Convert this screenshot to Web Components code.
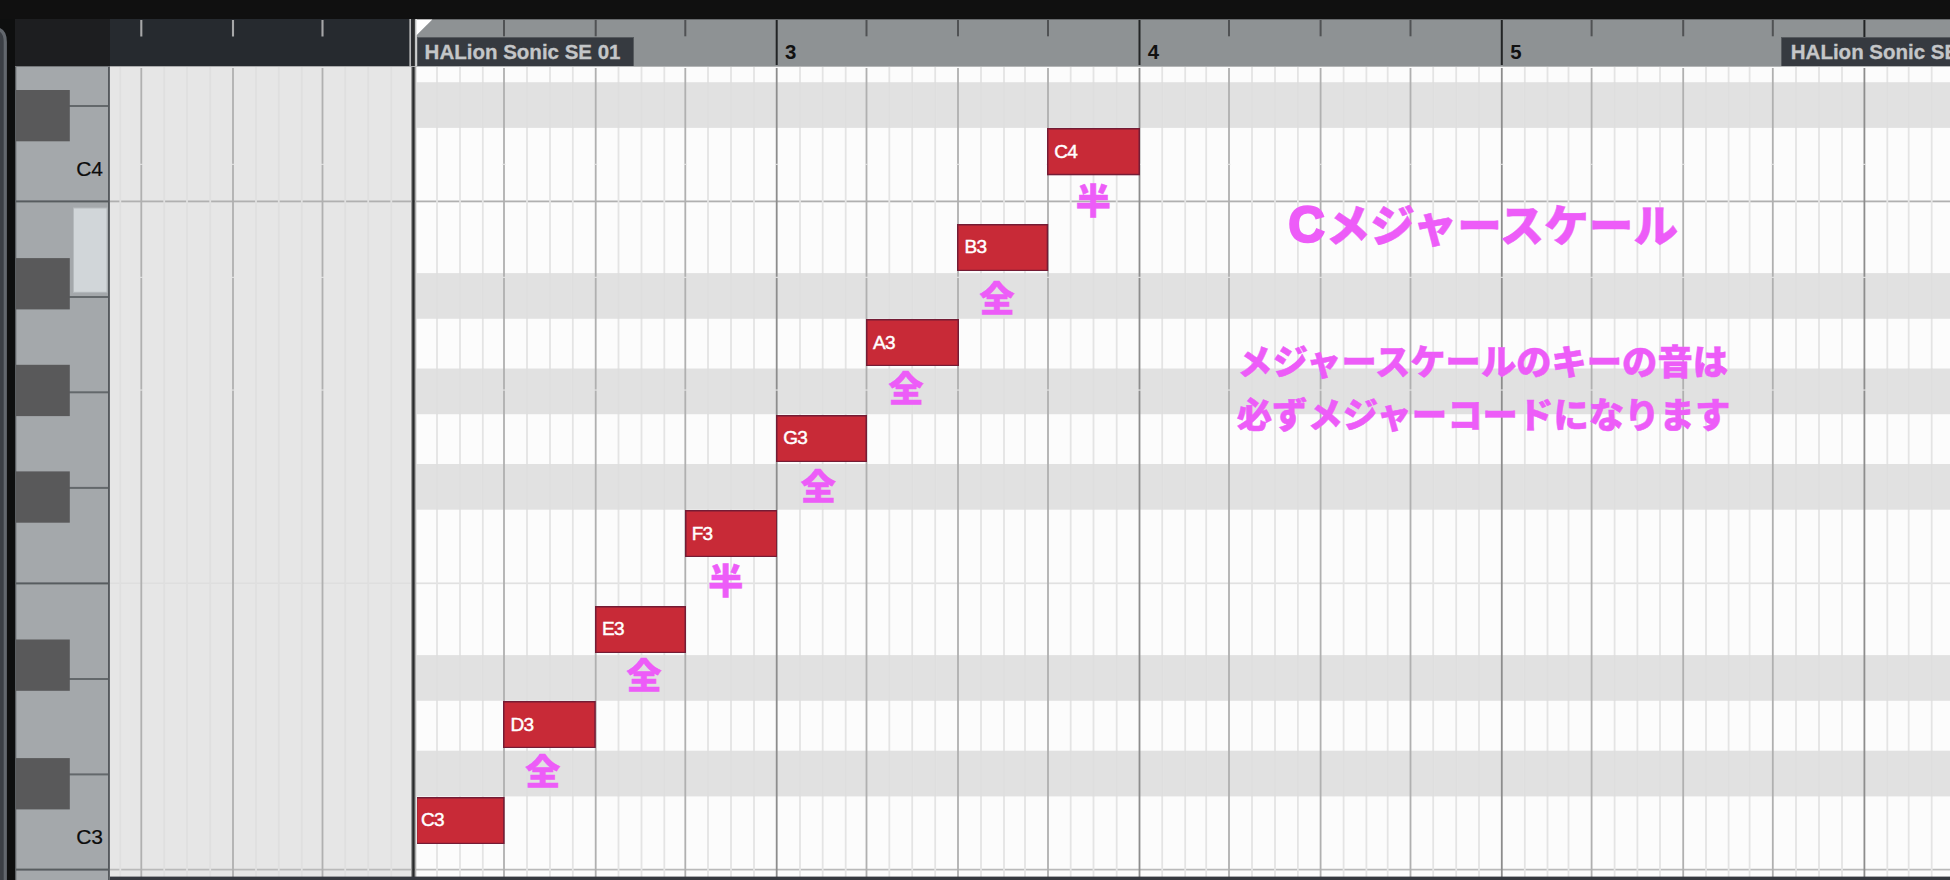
<!DOCTYPE html>
<html lang="ja">
<head>
<meta charset="utf-8">
<title>Key Editor</title>
<style>
html,body{margin:0;height:100%;background:#101010;overflow:hidden}
body{font-family:"Liberation Sans",Arial,sans-serif}
.latin{font:bold 50px/0 "Liberation Sans",Arial,sans-serif;-webkit-text-stroke:2.6px #ed5cf8;margin:0 1.2px 0 -1.2px}
</style>
</head>
<body>
<key-editor>
  <side-rail slot="rail"></side-rail>
  <ruler-corner slot="corner"></ruler-corner>
  <time-ruler slot="ruler">
    <part-label x="417.3" w="216.4" pad="7.3">HALion Sonic SE 01</part-label>
    <part-label x="1780.5" w="218" pad="10.3">HALion Sonic SE 01</part-label>
    <bar-number x="785">3</bar-number>
    <bar-number x="1147.8">4</bar-number>
    <bar-number x="1510.2">5</bar-number>
  </time-ruler>
  <piano-keys slot="keys">
    <key-name y="169">C4</key-name>
    <key-name y="837.3">C3</key-name>
  </piano-keys>
  <note-grid slot="grid">
    <midi-note x="417" y="796.5" w="87.6" first>C3</midi-note>
    <midi-note x="503.4" y="701" w="92.8">D3</midi-note>
    <midi-note x="595" y="605.5" w="91">E3</midi-note>
    <midi-note x="684.6" y="510.2" w="92.6">F3</midi-note>
    <midi-note x="776.2" y="414.6" w="91">G3</midi-note>
    <midi-note x="865.9" y="319" w="93">A3</midi-note>
    <midi-note x="957.4" y="223.7" w="91.2">B3</midi-note>
    <midi-note x="1047.2" y="128.3" w="93">C4</midi-note>
    <text-mark x="542.7" y="770.4">全</text-mark>
    <text-mark x="644" y="674.1">全</text-mark>
    <text-mark x="725.7" y="579">半</text-mark>
    <text-mark x="818.3" y="485.1">全</text-mark>
    <text-mark x="906" y="386.9">全</text-mark>
    <text-mark x="997" y="296.9">全</text-mark>
    <text-mark x="1093.3" y="198.7">半</text-mark>
    <text-mark x="1483.8" y="222.6" size="44.6"><span class="latin">C</span>メジャースケール</text-mark>
    <text-mark x="1482.7" y="359.6" size="35.3">メジャースケールのキーの音は</text-mark>
    <text-mark x="1483.5" y="413" size="35.4">必ずメジャーコードになります</text-mark>
  </note-grid>
</key-editor>
<script>
const BEATS=[141.3,233,322.5,504,595.7,685.3,776.7,866.5,958,1048,1139.5,1229,1320.6,1410.5,1501.8,1591.6,1683.2,1772.8,1864.4];
const BARS=new Set([776.7,1139.5,1501.8,1864.4]);
const SUBS=[120.3,164.2,187,210.2,256,278.8,301.8,345.2,368.2,391.3,437,460,482.8,527,550,572.8,618.5,641.5,664.3,708,731,754,800,822.7,845.7,889.3,912.2,935.2,981,1004,1025,1070.7,1093.5,1116.7,1162.2,1185.2,1206.2,1252,1275,1297.9,1343.6,1366.4,1387.7,1433.2,1456.2,1479,1524.8,1547.5,1568.5,1614.6,1637.4,1660,1706,1728.6,1749.6,1796,1819,1842,1887.3,1908.7,1931.7];
const rect=(x,y,w,h,f)=>`<rect x="${x}" y="${y}" width="${w}" height="${h}" fill="${f}"/>`;
const vline=(x,y1,y2,w,f)=>rect((x-w/2).toFixed(2),y1,w,y2-y1,f);
const hline=(y,x1,x2,w,f)=>rect(x1,(y-w/2).toFixed(2),x2-x1,w,f);
const define=(name,render)=>customElements.define(name,class extends HTMLElement{
  connectedCallback(){
    if(this.shadowRoot)return;
    const n=k=>parseFloat(this.getAttribute(k));
    this.attachShadow({mode:"open"}).innerHTML=render(n,this);
  }
});
const svgCss="svg{display:block;width:100%;height:100%}";

define("key-editor",()=>`<style>
:host{display:grid;width:1950px;height:880px;padding-top:19px;box-sizing:border-box;grid-template-columns:15px 95px 1fr;grid-template-rows:48px 1fr;background:#101010}
::slotted(*){min-width:0;min-height:0}
::slotted([slot=rail]){grid-column:1;grid-row:1/3}
</style><slot name="rail"></slot><slot name="corner"></slot><slot name="ruler"></slot><slot name="keys"></slot><slot name="grid"></slot>`);

define("side-rail",()=>`<style>:host{display:block;background:#0e0f0f}${svgCss}</style>
<svg viewBox="0 19 15 861"><path d="M-20 28.5H-5Q5.3 29 5.3 42V890H-20Z" fill="#3b3f45" stroke="#62676d" stroke-width="3.2"/></svg>`);

define("ruler-corner",()=>`<style>:host{display:block;background:#1d1e20;border-bottom:1px solid #74777a;box-sizing:border-box}</style>`);

define("time-ruler",()=>{
  let s=rect(109,19,303,48,"#262a2f")+rect(412,19,1538,48,"#8e9294")+rect(412,19,1538,1,"#66696b");
  for(const x of BEATS){
    if(x<412)s+=vline(x,20,36.5,2.1,"#a6a7a8");
    else if(BARS.has(x))s+=vline(x,20,65,2,"#222425");
    else s+=vline(x,20,36.3,2,"#505254");
  }
  s+=vline(410.2,19,67,1.7,"#b4b5b6")+vline(413.3,19,67,3,"#2b2c2d")+vline(416.1,19,67,1.7,"#d0d1d1");
  s+='<path d="M416.5 19.6H432.3L416.5 35.2Z" fill="#fff"/>';
  s+=rect(110,66.1,1840,.9,"#b9babb");
  return `<style>:host{display:block;position:relative;overflow:hidden}${svgCss}</style><svg viewBox="110 19 1840 48">${s}</svg><slot></slot>`;
});

define("part-label",n=>`<style>:host{position:absolute;left:${n("x")-110}px;top:18px;width:${n("w")}px;height:29px;box-sizing:border-box;border:1.4px solid #565a5e;border-bottom:0;background:#363a40;color:#c4c6c8;font:bold 20.5px/28px "Liberation Sans",Arial,sans-serif;-webkit-text-stroke:.3px #c4c6c8;padding-left:${n("pad")-1}px;white-space:nowrap}</style><slot></slot>`);

define("bar-number",n=>`<style>:host{position:absolute;left:${n("x")-110}px;top:20.4px;color:#111;font:bold 20.4px/26px "Liberation Sans",Arial,sans-serif}</style><slot></slot>`);

define("piano-keys",()=>{
  let s=rect(15,67,95,813,"#a4a8ab")+rect(15,67,1.3,813,"#5c6063");
  for(const y of [106,297,392.3,487.9,679,774.4])s+=hline(y,69,109,2,"#63686b");
  for(const y of [201.4,583.4,869.6])s+=hline(y,16,109,2,"#575c5f");
  for(const y of [90,258.1,364.8,471.4,639.5,758.1])s+=rect(16,y,53.8,51.3,"#59595a");
  s+=rect(73,207.5,34.5,85.3,"#b5babd")+rect(74,208.5,32.5,83.3,"#d1d6d9");
  s+=rect(108,67,1.8,813,"#55595d");
  return `<style>:host{display:block;position:relative;overflow:hidden}${svgCss}</style><svg viewBox="15 67 95 813">${s}</svg><slot></slot>`;
});

define("key-name",n=>`<style>:host{position:absolute;right:7px;top:${n("y")-67-13}px;color:#0c0c0c;font-size:21px;line-height:26px;-webkit-text-stroke:.2px #0c0c0c}</style><slot></slot>`);

define("note-grid",()=>{
  let s=rect(110,67,303,813,"#e6e6e6")+rect(413,67,1537,813,"#fcfcfc");
  for(const y of [82.2,273.1,368.5,464,655.1,750.7])s+=rect(416.7,y,1533.3,45.7,"#e1e1e1");
  s+=hline(201.4,110,1950,1.8,"#b0b0b0")+hline(869.6,110,1950,1.7,"#b9b9b9")+hline(583.3,110,413,1.5,"#dedede")+hline(583.3,413,1950,1.7,"#e1e1e1");
  for(const x of SUBS)s+=vline(x,67,877,1.8,x<412?"#dfdfdf":"#e4e4e4");
  for(const y of [82.2,273.1,368.5,464,655.1,750.7])for(const x of SUBS)if(x>412)s+=vline(x,y,y+45.7,1.8,"#dedede");
  for(const x of BEATS)s+=vline(x,68,877,1.8,BARS.has(x)?"#8d8d8d":"#b0b0b0");
  for(const y of [164.3,277.3,390])for(const x of BEATS)s+=rect(x-1.5,y-.5,3,1.1,"#e4e4e4");
  s+=vline(411.7,67,877,1.4,"#999")+vline(413.5,67,877,2.6,"#292a2b")+vline(415.6,67,877,1.4,"#aaa");
  s+=rect(109,876.6,1841,4,"#363940");
  return `<style>:host{display:block;position:relative;overflow:hidden}${svgCss}</style><svg viewBox="110 67 1840 813">${s}</svg><slot></slot>`;
});

define("midi-note",(n,el)=>`<style>:host{position:absolute;left:${n("x")-110}px;top:${n("y")-67}px;width:${n("w")}px;height:47.3px}
svg{position:absolute;inset:0;width:100%;height:100%}
span{position:absolute;left:${el.hasAttribute("first")?4:7.1}px;top:10.8px;color:#fff;font-size:19px;line-height:26px;letter-spacing:-.7px;-webkit-text-stroke:.45px #fff}</style>
<svg>${rect(0,0,n("w"),47.3,"#741c35")}${rect(el.hasAttribute("first")?.3:1.5,1.5,n("w")-(el.hasAttribute("first")?1.8:3),44.3,"#c82a37")}</svg><span><slot></slot></span>`);

define("text-mark",n=>{
  const size=n("size")||35;
  return `<style>:host{position:absolute;left:${n("x")-110}px;top:${n("y")-67}px;transform:translate(-50%,-50%);color:#ed5cf8;font:900 ${size}px/1.2 "Noto Sans CJK JP",sans-serif;-webkit-text-stroke:.5px #ed5cf8;white-space:nowrap}</style><slot></slot>`;
});
</script>
</body>
</html>
